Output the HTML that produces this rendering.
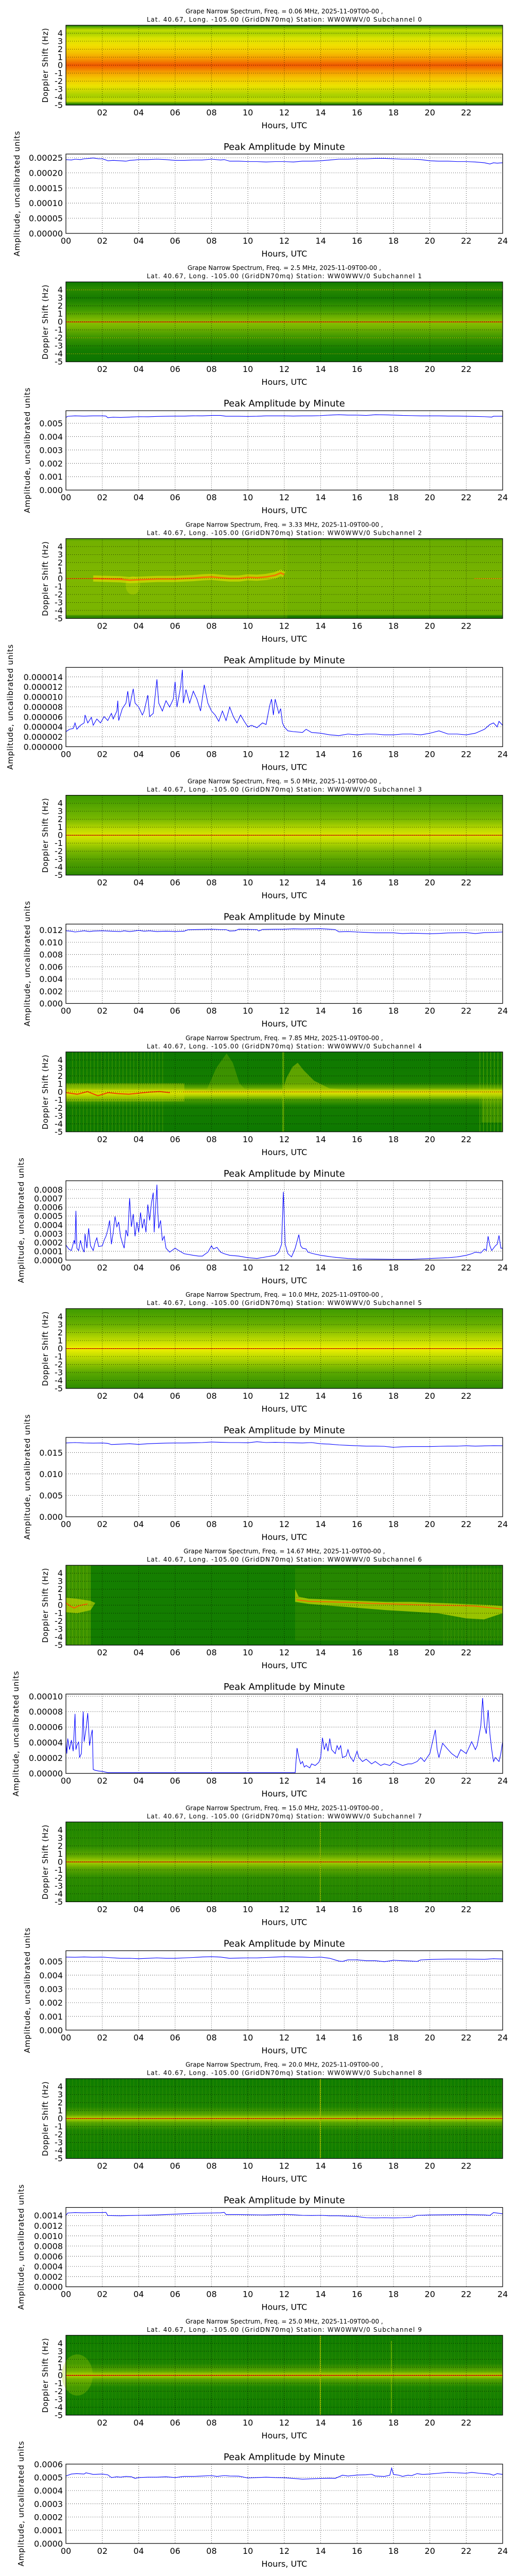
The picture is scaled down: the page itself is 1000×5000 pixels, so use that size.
<!DOCTYPE html>
<html><head><meta charset="utf-8"><style>
html,body{margin:0;padding:0;background:#fff;}
svg{display:block;}
text{font-family:"DejaVu Sans","Liberation Sans",sans-serif;fill:#000;}
.t1{font-size:12px;text-anchor:middle;}
.tk{font-size:16px;}
.r{text-anchor:end;}
.m{text-anchor:middle;}
.xl{font-size:16px;text-anchor:middle;}
.at{font-size:18px;text-anchor:middle;}
.yl{font-size:15px;text-anchor:middle;}
.g line{stroke:#000;stroke-width:0.8;stroke-dasharray:1,3;}
.c{fill:none;stroke:#0000ff;stroke-width:1.1;}
</style></head><body>
<svg width="1000" height="5000" viewBox="0 0 1000 5000" xmlns="http://www.w3.org/2000/svg" xml:space="preserve">
<defs>
<linearGradient id="g0" x1="0" y1="0" x2="0" y2="1">
<stop offset="0" stop-color="#0d6e00"/><stop offset=".02" stop-color="#5aa800"/><stop offset=".06" stop-color="#c4dc00"/><stop offset=".1" stop-color="#a8d000"/><stop offset=".16" stop-color="#d8e200"/><stop offset=".25" stop-color="#f0e000"/><stop offset=".34" stop-color="#f4c400"/><stop offset=".42" stop-color="#f59a00"/><stop offset=".5" stop-color="#f05800"/><stop offset=".58" stop-color="#f59a00"/><stop offset=".66" stop-color="#f4c400"/><stop offset=".76" stop-color="#ece200"/><stop offset=".88" stop-color="#a8d000"/><stop offset=".95" stop-color="#c8dc00"/><stop offset=".98" stop-color="#3a9000"/><stop offset="1" stop-color="#0d6e00"/>
</linearGradient>
<linearGradient id="g1" x1="0" y1="0" x2="0" y2="1">
<stop offset="0" stop-color="#0f7a00"/><stop offset=".08" stop-color="#2a8a00"/><stop offset=".2" stop-color="#167c00"/><stop offset=".35" stop-color="#3f9a00"/><stop offset=".46" stop-color="#78b600"/><stop offset=".5" stop-color="#88c000"/><stop offset=".56" stop-color="#78b600"/><stop offset=".7" stop-color="#3a9400"/><stop offset=".85" stop-color="#147c00"/><stop offset="1" stop-color="#0c7400"/>
</linearGradient>
<linearGradient id="g2" x1="0" y1="0" x2="0" y2="1">
<stop offset="0" stop-color="#2e8a00"/><stop offset=".03" stop-color="#6aac00"/><stop offset=".5" stop-color="#78b400"/><stop offset=".95" stop-color="#70b000"/><stop offset=".97" stop-color="#1c7c00"/><stop offset="1" stop-color="#137800"/>
</linearGradient>
<linearGradient id="g3" x1="0" y1="0" x2="0" y2="1">
<stop offset="0" stop-color="#3c9800"/><stop offset=".15" stop-color="#5aa800"/><stop offset=".3" stop-color="#78b800"/><stop offset=".42" stop-color="#b8d800"/><stop offset=".5" stop-color="#d8e400"/><stop offset=".58" stop-color="#b8d800"/><stop offset=".7" stop-color="#78b600"/><stop offset=".85" stop-color="#4c9c00"/><stop offset=".95" stop-color="#3a9200"/><stop offset="1" stop-color="#2a8800"/>
</linearGradient>
<linearGradient id="g4" x1="0" y1="0" x2="0" y2="1">
<stop offset="0" stop-color="#0d7800"/><stop offset=".38" stop-color="#147d00"/><stop offset=".45" stop-color="#5ea600"/><stop offset=".49" stop-color="#d0dc00"/><stop offset=".51" stop-color="#e0e000"/><stop offset=".54" stop-color="#b8d400"/><stop offset=".6" stop-color="#4a9c00"/><stop offset=".68" stop-color="#147c00"/><stop offset="1" stop-color="#0d7800"/>
</linearGradient>
<linearGradient id="g5" x1="0" y1="0" x2="0" y2="1">
<stop offset="0" stop-color="#3e9a00"/><stop offset=".2" stop-color="#68b000"/><stop offset=".4" stop-color="#c0dc00"/><stop offset=".5" stop-color="#f0f000"/><stop offset=".6" stop-color="#c0dc00"/><stop offset=".8" stop-color="#5aa800"/><stop offset="1" stop-color="#2e8c00"/>
</linearGradient>
<linearGradient id="g6" x1="0" y1="0" x2="0" y2="1">
<stop offset="0" stop-color="#157e00"/><stop offset="1" stop-color="#127c00"/>
</linearGradient>
<linearGradient id="g7" x1="0" y1="0" x2="0" y2="1">
<stop offset="0" stop-color="#1f8500"/><stop offset=".3" stop-color="#2a8c00"/><stop offset=".42" stop-color="#5ca600"/><stop offset=".5" stop-color="#a8d000"/><stop offset=".58" stop-color="#5ca600"/><stop offset=".7" stop-color="#2a8a00"/><stop offset="1" stop-color="#1f8400"/>
</linearGradient>
<linearGradient id="g8" x1="0" y1="0" x2="0" y2="1">
<stop offset="0" stop-color="#0e7c00"/><stop offset=".35" stop-color="#1a8200"/><stop offset=".45" stop-color="#58a400"/><stop offset=".5" stop-color="#b8d800"/><stop offset=".55" stop-color="#58a400"/><stop offset=".65" stop-color="#1a8200"/><stop offset="1" stop-color="#0e7c00"/>
</linearGradient>
<pattern id="str" width="7" height="10" patternUnits="userSpaceOnUse"><rect x="0" y="0" width="1.6" height="10" fill="#b8dc00"/></pattern>
<g id="sg" class="g">
<line x1="198.7" y1="49" x2="198.7" y2="204"/><line x1="269.3" y1="49" x2="269.3" y2="204"/><line x1="340" y1="49" x2="340" y2="204"/><line x1="410.7" y1="49" x2="410.7" y2="204"/><line x1="481.3" y1="49" x2="481.3" y2="204"/><line x1="552" y1="49" x2="552" y2="204"/><line x1="622.7" y1="49" x2="622.7" y2="204"/><line x1="693.3" y1="49" x2="693.3" y2="204"/><line x1="764" y1="49" x2="764" y2="204"/><line x1="834.7" y1="49" x2="834.7" y2="204"/><line x1="905.3" y1="49" x2="905.3" y2="204"/>
<line x1="128" y1="64.5" x2="976" y2="64.5"/><line x1="128" y1="80" x2="976" y2="80"/><line x1="128" y1="95.5" x2="976" y2="95.5"/><line x1="128" y1="111" x2="976" y2="111"/><line x1="128" y1="126.5" x2="976" y2="126.5"/><line x1="128" y1="142" x2="976" y2="142"/><line x1="128" y1="157.5" x2="976" y2="157.5"/><line x1="128" y1="173" x2="976" y2="173"/><line x1="128" y1="188.5" x2="976" y2="188.5"/>
</g>
<g id="ag" class="g">
<line x1="198.7" y1="299" x2="198.7" y2="453"/><line x1="269.3" y1="299" x2="269.3" y2="453"/><line x1="340" y1="299" x2="340" y2="453"/><line x1="410.7" y1="299" x2="410.7" y2="453"/><line x1="481.3" y1="299" x2="481.3" y2="453"/><line x1="552" y1="299" x2="552" y2="453"/><line x1="622.7" y1="299" x2="622.7" y2="453"/><line x1="693.3" y1="299" x2="693.3" y2="453"/><line x1="764" y1="299" x2="764" y2="453"/><line x1="834.7" y1="299" x2="834.7" y2="453"/><line x1="905.3" y1="299" x2="905.3" y2="453"/>
</g>
<rect id="sf" x="128" y="49" width="848" height="155" fill="none" stroke="#000" stroke-width="1.2"/>
<rect id="af" x="128" y="299" width="848" height="154" fill="none" stroke="#000" stroke-width="1.2"/>
</defs>

<!-- ============ SECTION 0 ============ -->
<g transform="translate(0,0)">
<text class="t1" x="552" y="26">Grape Narrow Spectrum, Freq. = 0.06 MHz, 2025-11-09T00-00 ,</text>
<text class="t1" x="552" y="42" textLength="534">Lat.  40.67, Long. -105.00 (GridDN70mq) Station: WW0WWV/0 Subchannel 0</text>
<rect x="128" y="49" width="848" height="155" fill="url(#g0)"/>
<use href="#sg"/><use href="#sf"/>
<g class="tk r"><text x="122" y="70">4</text><text x="122" y="85.5">3</text><text x="122" y="101">2</text><text x="122" y="116.5">1</text><text x="122" y="132">0</text><text x="122" y="147.5">-1</text><text x="122" y="163">-2</text><text x="122" y="178.5">-3</text><text x="122" y="194">-4</text><text x="122" y="209.5">-5</text></g>
<g class="tk m"><text x="198.7" y="224">02</text><text x="269.3" y="224">04</text><text x="340" y="224">06</text><text x="410.7" y="224">08</text><text x="481.3" y="224">10</text><text x="552" y="224">12</text><text x="622.7" y="224">14</text><text x="693.3" y="224">16</text><text x="764" y="224">18</text><text x="834.7" y="224">20</text><text x="905.3" y="224">22</text></g>
<text class="xl" x="552" y="249">Hours, UTC</text>
<text class="yl" transform="translate(93,127) rotate(-90)" textLength="145">Doppler Shift (Hz)</text>
<text class="at" x="552" y="291">Peak Amplitude by Minute</text>
<use href="#ag"/>
<g class="g"><line x1="128" y1="423.6" x2="976" y2="423.6"/><line x1="128" y1="394.2" x2="976" y2="394.2"/><line x1="128" y1="364.9" x2="976" y2="364.9"/><line x1="128" y1="335.5" x2="976" y2="335.5"/><line x1="128" y1="306.1" x2="976" y2="306.1"/></g>
<g class="tk r"><text x="122" y="459">0.00000</text><text x="122" y="429.6">0.00005</text><text x="122" y="400.2">0.00010</text><text x="122" y="370.9">0.00015</text><text x="122" y="341.5">0.00020</text><text x="122" y="312.1">0.00025</text></g>
<g transform="translate(128,453) scale(35.3333,-154)"><polyline class="c" vector-effect="non-scaling-stroke" points="0,.93 .3,.925 .5,.935 .8,.93 1,.94 1.3,.945 1.5,.95 1.8,.94 2,.94 2.2,.925 2.3,.915 2.6,.92 3,.915 3.3,.91 3.5,.92 3.8,.925 4,.93 4.5,.93 5,.935 5.5,.93 6,.92 6.5,.92 7,.925 7.5,.925 8,.935 8.5,.925 8.7,.93 9,.91 9.5,.91 10,.905 10.5,.905 11,.9 11.5,.905 12,.905 12.5,.9 13,.91 13.5,.91 14,.915 14.5,.925 15,.935 15.5,.935 16,.94 16.5,.94 17,.945 17.5,.945 18,.94 18.5,.935 19,.935 19.5,.93 20,.915 20.5,.91 21,.91 21.5,.905 22,.905 22.5,.9 23,.89 23.3,.875 23.5,.89 23.7,.885 24,.89"/></g>
<use href="#af"/>
<g class="tk m"><text x="128" y="473">00</text><text x="198.7" y="473">02</text><text x="269.3" y="473">04</text><text x="340" y="473">06</text><text x="410.7" y="473">08</text><text x="481.3" y="473">10</text><text x="552" y="473">12</text><text x="622.7" y="473">14</text><text x="693.3" y="473">16</text><text x="764" y="473">18</text><text x="834.7" y="473">20</text><text x="905.3" y="473">22</text><text x="976" y="473">24</text></g>
<text class="xl" x="552" y="498">Hours, UTC</text>
<text class="yl" transform="translate(38,376) rotate(-90)" textLength="243">Amplitude, uncalibrated units</text>
</g>

<!-- ============ SECTION 1 ============ -->
<g transform="translate(0,498.2)">
<text class="t1" x="552" y="26">Grape Narrow Spectrum, Freq. = 2.5 MHz, 2025-11-09T00-00 ,</text>
<text class="t1" x="552" y="42" textLength="534">Lat.  40.67, Long. -105.00 (GridDN70mq) Station: WW0WWV/0 Subchannel 1</text>
<rect x="128" y="49" width="848" height="155" fill="url(#g1)"/>
<rect x="128" y="64" width="848" height="1" fill="#c8e000" opacity=".6"/><rect x="128" y="157" width="848" height="1" fill="#c8e000" opacity=".6"/><rect x="128" y="188" width="848" height="1" fill="#c8e000" opacity=".5"/>
<rect x="128" y="126" width="848" height="1.4" fill="#ff1a00"/>
<use href="#sg"/><use href="#sf"/>
<g class="tk r"><text x="122" y="70">4</text><text x="122" y="85.5">3</text><text x="122" y="101">2</text><text x="122" y="116.5">1</text><text x="122" y="132">0</text><text x="122" y="147.5">-1</text><text x="122" y="163">-2</text><text x="122" y="178.5">-3</text><text x="122" y="194">-4</text><text x="122" y="209.5">-5</text></g>
<g class="tk m"><text x="198.7" y="224">02</text><text x="269.3" y="224">04</text><text x="340" y="224">06</text><text x="410.7" y="224">08</text><text x="481.3" y="224">10</text><text x="552" y="224">12</text><text x="622.7" y="224">14</text><text x="693.3" y="224">16</text><text x="764" y="224">18</text><text x="834.7" y="224">20</text><text x="905.3" y="224">22</text></g>
<text class="xl" x="552" y="249">Hours, UTC</text>
<text class="yl" transform="translate(93,127) rotate(-90)" textLength="145">Doppler Shift (Hz)</text>
<text class="at" x="552" y="291">Peak Amplitude by Minute</text>
<use href="#ag"/>
<g class="g"><line x1="128" y1="427" x2="976" y2="427"/><line x1="128" y1="401.1" x2="976" y2="401.1"/><line x1="128" y1="375.1" x2="976" y2="375.1"/><line x1="128" y1="349.1" x2="976" y2="349.1"/><line x1="128" y1="323.2" x2="976" y2="323.2"/></g>
<g class="tk r"><text x="122" y="459">0.000</text><text x="122" y="433">0.001</text><text x="122" y="407.1">0.002</text><text x="122" y="381.1">0.003</text><text x="122" y="355.1">0.004</text><text x="122" y="329.2">0.005</text></g>
<g transform="translate(128,453) scale(35.3333,-154)"><polyline class="c" vector-effect="non-scaling-stroke" points="0,.915 .1,.93 .5,.935 1,.932 1.5,.935 2,.935 2.2,.933 2.3,.912 2.6,.918 3,.915 3.5,.92 4,.925 4.5,.924 5,.928 5.5,.93 6,.932 6.5,.932 7,.936 7.5,.935 8,.94 8.5,.94 8.8,.93 9,.93 9.5,.93 10,.928 10.5,.93 11,.935 11.5,.935 12,.935 12.5,.933 13,.935 13.5,.935 14,.938 14.5,.945 15,.95 15.5,.945 16,.945 16.5,.94 17,.95 17.5,.948 18,.945 18.5,.94 19,.938 19.5,.935 20,.935 20.5,.935 21,.933 21.5,.933 22,.93 22.5,.928 23,.925 23.4,.92 23.5,.93 24,.93"/></g>
<use href="#af"/>
<g class="tk m"><text x="128" y="473">00</text><text x="198.7" y="473">02</text><text x="269.3" y="473">04</text><text x="340" y="473">06</text><text x="410.7" y="473">08</text><text x="481.3" y="473">10</text><text x="552" y="473">12</text><text x="622.7" y="473">14</text><text x="693.3" y="473">16</text><text x="764" y="473">18</text><text x="834.7" y="473">20</text><text x="905.3" y="473">22</text><text x="976" y="473">24</text></g>
<text class="xl" x="552" y="498">Hours, UTC</text>
<text class="yl" transform="translate(58,376) rotate(-90)" textLength="243">Amplitude, uncalibrated units</text>
</g>

<!-- ============ SECTION 2 ============ -->
<g transform="translate(0,996.4)">
<text class="t1" x="552" y="26">Grape Narrow Spectrum, Freq. = 3.33 MHz, 2025-11-09T00-00 ,</text>
<text class="t1" x="552" y="42" textLength="534">Lat.  40.67, Long. -105.00 (GridDN70mq) Station: WW0WWV/0 Subchannel 2</text>
<rect x="128" y="49" width="848" height="155" fill="url(#g2)"/>
<rect x="128" y="49" width="430" height="155" fill="#a0c800" opacity=".18"/>
<ellipse cx="258" cy="140" rx="14" ry="18" fill="#d8e400" opacity=".3"/>
<polyline points="181,126.5 234,128 252,129.6 269,128.8 305,127.3 340,127.3 358,126.5 375,125.7 393,124.2 411,123.4 428,125 446,126.5 464,126.5 481,124.2 499,125 517,123.4 534,120.3 545,115.6 552,118.8" fill="none" stroke="#e4e200" stroke-width="12" opacity=".6"/>
<polyline points="181,126.5 234,128 252,129.6 269,128.8 305,127.3 340,127.3 358,126.5 375,125.7 393,124.2 411,123.4 428,125 446,126.5 464,126.5 481,124.2 499,125 517,123.4 534,120.3 545,115.6 552,118.8" fill="none" stroke="#f07800" stroke-width="3"/>
<rect x="128" y="126" width="110" height="1.3" fill="#ff4000"/><rect x="920" y="126" width="56" height="1.3" fill="#f09000"/>
<use href="#sg"/><use href="#sf"/>
<g class="tk r"><text x="122" y="70">4</text><text x="122" y="85.5">3</text><text x="122" y="101">2</text><text x="122" y="116.5">1</text><text x="122" y="132">0</text><text x="122" y="147.5">-1</text><text x="122" y="163">-2</text><text x="122" y="178.5">-3</text><text x="122" y="194">-4</text><text x="122" y="209.5">-5</text></g>
<g class="tk m"><text x="198.7" y="224">02</text><text x="269.3" y="224">04</text><text x="340" y="224">06</text><text x="410.7" y="224">08</text><text x="481.3" y="224">10</text><text x="552" y="224">12</text><text x="622.7" y="224">14</text><text x="693.3" y="224">16</text><text x="764" y="224">18</text><text x="834.7" y="224">20</text><text x="905.3" y="224">22</text></g>
<text class="xl" x="552" y="249">Hours, UTC</text>
<text class="yl" transform="translate(93,127) rotate(-90)" textLength="145">Doppler Shift (Hz)</text>
<text class="at" x="552" y="291">Peak Amplitude by Minute</text>
<use href="#ag"/>
<g class="g"><line x1="128" y1="433.6" x2="976" y2="433.6"/><line x1="128" y1="414.3" x2="976" y2="414.3"/><line x1="128" y1="394.9" x2="976" y2="394.9"/><line x1="128" y1="375.5" x2="976" y2="375.5"/><line x1="128" y1="356.1" x2="976" y2="356.1"/><line x1="128" y1="336.8" x2="976" y2="336.8"/><line x1="128" y1="317.4" x2="976" y2="317.4"/></g>
<g class="tk r"><text x="122" y="459">0.000000</text><text x="122" y="439.6">0.000002</text><text x="122" y="420.3">0.000004</text><text x="122" y="400.9">0.000006</text><text x="122" y="381.5">0.000008</text><text x="122" y="362.1">0.000010</text><text x="122" y="342.8">0.000012</text><text x="122" y="323.4">0.000014</text></g>
<g transform="translate(128,453) scale(35.3333,-154)"><polyline class="c" vector-effect="non-scaling-stroke" points="0,.19 .2,.22 .4,.23 .5,.3 .6,.22 .8,.27 1,.3 1.05,.4 1.2,.3 1.4,.37 1.5,.27 1.7,.35 1.9,.3 2.1,.38 2.3,.33 2.5,.42 2.6,.35 2.8,.45 2.85,.58 2.9,.33 3.1,.48 3.3,.55 3.4,.7 3.5,.5 3.6,.62 3.7,.73 3.8,.55 4,.5 4.2,.4 4.3,.45 4.5,.65 4.6,.38 4.8,.42 5,.85 5.1,.55 5.3,.45 5.5,.58 5.7,.5 5.9,.6 6,.82 6.1,.5 6.3,.75 6.4,.97 6.45,.55 6.6,.72 6.8,.55 7,.7 7.2,.6 7.4,.45 7.6,.78 7.8,.55 8,.45 8.2,.4 8.4,.32 8.6,.45 8.8,.33 9,.5 9.2,.38 9.4,.3 9.6,.4 9.8,.32 10,.25 10.2,.27 10.5,.24 10.8,.3 11,.28 11.2,.52 11.3,.6 11.4,.4 11.5,.6 11.7,.42 11.8,.48 11.9,.3 12,.25 12.2,.2 12.5,.19 13,.18 13.2,.22 13.5,.18 14,.17 14.5,.15 15,.14 15.5,.16 16,.15 16.5,.16 17,.16 17.5,.15 18,.15 18.5,.16 19,.16 19.5,.15 20,.17 20.5,.2 21,.16 21.5,.16 22,.15 22.5,.17 23,.22 23.3,.28 23.5,.3 23.7,.25 23.8,.32 24,.27"/></g>
<use href="#af"/>
<g class="tk m"><text x="128" y="473">00</text><text x="198.7" y="473">02</text><text x="269.3" y="473">04</text><text x="340" y="473">06</text><text x="410.7" y="473">08</text><text x="481.3" y="473">10</text><text x="552" y="473">12</text><text x="622.7" y="473">14</text><text x="693.3" y="473">16</text><text x="764" y="473">18</text><text x="834.7" y="473">20</text><text x="905.3" y="473">22</text><text x="976" y="473">24</text></g>
<text class="xl" x="552" y="498">Hours, UTC</text>
<text class="yl" transform="translate(25,376) rotate(-90)" textLength="243">Amplitude, uncalibrated units</text>
</g>

<!-- ============ SECTION 3 ============ -->
<g transform="translate(0,1494.6)">
<text class="t1" x="552" y="26">Grape Narrow Spectrum, Freq. = 5.0 MHz, 2025-11-09T00-00 ,</text>
<text class="t1" x="552" y="42" textLength="534">Lat.  40.67, Long. -105.00 (GridDN70mq) Station: WW0WWV/0 Subchannel 3</text>
<rect x="128" y="49" width="848" height="155" fill="url(#g3)"/>
<rect x="128" y="126" width="848" height="1.2" fill="#e00000"/>
<use href="#sg"/><use href="#sf"/>
<g class="tk r"><text x="122" y="70">4</text><text x="122" y="85.5">3</text><text x="122" y="101">2</text><text x="122" y="116.5">1</text><text x="122" y="132">0</text><text x="122" y="147.5">-1</text><text x="122" y="163">-2</text><text x="122" y="178.5">-3</text><text x="122" y="194">-4</text><text x="122" y="209.5">-5</text></g>
<g class="tk m"><text x="198.7" y="224">02</text><text x="269.3" y="224">04</text><text x="340" y="224">06</text><text x="410.7" y="224">08</text><text x="481.3" y="224">10</text><text x="552" y="224">12</text><text x="622.7" y="224">14</text><text x="693.3" y="224">16</text><text x="764" y="224">18</text><text x="834.7" y="224">20</text><text x="905.3" y="224">22</text></g>
<text class="xl" x="552" y="249">Hours, UTC</text>
<text class="yl" transform="translate(93,127) rotate(-90)" textLength="145">Doppler Shift (Hz)</text>
<text class="at" x="552" y="291">Peak Amplitude by Minute</text>
<use href="#ag"/>
<g class="g"><line x1="128" y1="429.3" x2="976" y2="429.3"/><line x1="128" y1="405.5" x2="976" y2="405.5"/><line x1="128" y1="381.8" x2="976" y2="381.8"/><line x1="128" y1="358.1" x2="976" y2="358.1"/><line x1="128" y1="334.4" x2="976" y2="334.4"/><line x1="128" y1="310.6" x2="976" y2="310.6"/></g>
<g class="tk r"><text x="122" y="459">0.000</text><text x="122" y="435.3">0.002</text><text x="122" y="411.5">0.004</text><text x="122" y="387.8">0.006</text><text x="122" y="364.1">0.008</text><text x="122" y="340.4">0.010</text><text x="122" y="316.6">0.012</text></g>
<g transform="translate(128,453) scale(35.3333,-154)"><polyline class="c" vector-effect="non-scaling-stroke" points="0,.915 .3,.91 .5,.9 1,.915 1.3,.905 1.5,.912 2,.915 2.5,.91 3,.905 3.2,.915 3.5,.905 4,.92 4.3,.91 4.6,.915 5,.905 5.5,.91 6,.905 6.5,.91 6.7,.928 7.5,.932 8,.935 8.5,.93 8.8,.93 9,.912 9.3,.915 9.5,.935 10,.932 10.5,.93 10.6,.912 10.8,.932 11.5,.935 12,.935 12.5,.94 13,.938 13.5,.94 14,.942 14.5,.935 14.8,.93 15,.902 15.5,.905 16,.9 16.5,.895 17,.89 17.5,.89 18,.89 18.5,.88 19,.885 19.5,.882 20,.878 20.5,.882 21,.888 21.5,.89 22,.892 22.5,.88 23,.892 23.5,.895 24,.9"/></g>
<use href="#af"/>
<g class="tk m"><text x="128" y="473">00</text><text x="198.7" y="473">02</text><text x="269.3" y="473">04</text><text x="340" y="473">06</text><text x="410.7" y="473">08</text><text x="481.3" y="473">10</text><text x="552" y="473">12</text><text x="622.7" y="473">14</text><text x="693.3" y="473">16</text><text x="764" y="473">18</text><text x="834.7" y="473">20</text><text x="905.3" y="473">22</text><text x="976" y="473">24</text></g>
<text class="xl" x="552" y="498">Hours, UTC</text>
<text class="yl" transform="translate(58,376) rotate(-90)" textLength="243">Amplitude, uncalibrated units</text>
</g>

<!-- ============ SECTION 4 ============ -->
<g transform="translate(0,1992.8)">
<text class="t1" x="552" y="26">Grape Narrow Spectrum, Freq. = 7.85 MHz, 2025-11-09T00-00 ,</text>
<text class="t1" x="552" y="42" textLength="534">Lat.  40.67, Long. -105.00 (GridDN70mq) Station: WW0WWV/0 Subchannel 4</text>
<rect x="128" y="49" width="848" height="155" fill="url(#g4)"/>
<rect x="140" y="49" width="180" height="155" fill="url(#str)" opacity=".2"/>
<rect x="928" y="49" width="48" height="155" fill="url(#str)" opacity=".3"/>
<rect x="128" y="110" width="230" height="35" fill="#d8e000" opacity=".35"/>
<polygon points="400,126 420,80 440,52 452,70 465,110 480,126" fill="#a8cc00" opacity=".28"/>
<polygon points="548,126 556,100 568,78 578,70 590,85 610,105 640,120 720,126 548,130" fill="#c8dc00" opacity=".42"/>
<rect x="548" y="49" width="4" height="155" fill="#b0d400" opacity=".4"/>
<rect x="935" y="126" width="40" height="60" fill="#b0d000" opacity=".25"/>
<polyline points="128,128 150,131 170,126 190,134 210,128 230,130 250,131 270,129 290,127 310,126 330,128" fill="none" stroke="#f04000" stroke-width="2"/>
<rect x="355" y="126" width="620" height="1.3" fill="#f0a000"/>
<use href="#sg"/><use href="#sf"/>
<g class="tk r"><text x="122" y="70">4</text><text x="122" y="85.5">3</text><text x="122" y="101">2</text><text x="122" y="116.5">1</text><text x="122" y="132">0</text><text x="122" y="147.5">-1</text><text x="122" y="163">-2</text><text x="122" y="178.5">-3</text><text x="122" y="194">-4</text><text x="122" y="209.5">-5</text></g>
<g class="tk m"><text x="198.7" y="224">02</text><text x="269.3" y="224">04</text><text x="340" y="224">06</text><text x="410.7" y="224">08</text><text x="481.3" y="224">10</text><text x="552" y="224">12</text><text x="622.7" y="224">14</text><text x="693.3" y="224">16</text><text x="764" y="224">18</text><text x="834.7" y="224">20</text><text x="905.3" y="224">22</text></g>
<text class="xl" x="552" y="249">Hours, UTC</text>
<text class="yl" transform="translate(93,127) rotate(-90)" textLength="145">Doppler Shift (Hz)</text>
<text class="at" x="552" y="291">Peak Amplitude by Minute</text>
<use href="#ag"/>
<g class="g"><line x1="128" y1="435.9" x2="976" y2="435.9"/><line x1="128" y1="418.8" x2="976" y2="418.8"/><line x1="128" y1="401.7" x2="976" y2="401.7"/><line x1="128" y1="384.6" x2="976" y2="384.6"/><line x1="128" y1="367.4" x2="976" y2="367.4"/><line x1="128" y1="350.3" x2="976" y2="350.3"/><line x1="128" y1="333.2" x2="976" y2="333.2"/><line x1="128" y1="316.1" x2="976" y2="316.1"/></g>
<g class="tk r"><text x="122" y="459">0.0000</text><text x="122" y="441.9">0.0001</text><text x="122" y="424.8">0.0002</text><text x="122" y="407.7">0.0003</text><text x="122" y="390.6">0.0004</text><text x="122" y="373.4">0.0005</text><text x="122" y="356.3">0.0006</text><text x="122" y="339.2">0.0007</text><text x="122" y="322.1">0.0008</text></g>
<g transform="translate(128,453) scale(35.3333,-154)"><polyline class="c" vector-effect="non-scaling-stroke" points="0,.19 .15,.14 .3,.12 .45,.25 .5,.2 .55,.62 .6,.15 .7,.12 .8,.25 .9,.15 1,.1 1.05,.33 1.15,.15 1.25,.4 1.35,.18 1.5,.12 1.6,.22 1.7,.28 1.8,.17 2,.18 2.1,.25 2.2,.3 2.3,.38 2.4,.5 2.5,.2 2.6,.35 2.7,.55 2.8,.42 2.9,.48 3,.3 3.1,.22 3.2,.15 3.3,.38 3.4,.3 3.5,.78 3.6,.42 3.7,.58 3.8,.3 3.9,.48 4,.35 4.1,.6 4.2,.4 4.3,.52 4.4,.35 4.5,.7 4.6,.5 4.7,.72 4.8,.85 4.85,.35 4.9,.55 5,.95 5.05,.6 5.1,.4 5.2,.5 5.3,.25 5.4,.3 5.5,.15 5.7,.1 6,.15 6.2,.12 6.5,.08 7,.06 7.3,.05 7.5,.05 7.8,.1 8,.18 8.1,.14 8.3,.16 8.5,.1 8.7,.08 9,.06 9.5,.05 10,.03 10.5,.02 11,.04 11.5,.06 11.7,.1 11.85,.2 11.95,.86 12.05,.2 12.2,.08 12.4,.04 12.6,.15 12.8,.32 12.9,.18 13,.15 13.2,.14 13.3,.1 13.6,.08 14,.06 14.3,.05 14.6,.04 15,.03 15.5,.02 16,.015 17,.012 18,.01 19,.01 19.5,.015 20,.02 20.5,.025 21,.03 21.5,.04 22,.06 22.3,.08 22.5,.1 22.8,.09 23,.14 23.1,.12 23.2,.3 23.3,.18 23.4,.12 23.6,.18 23.7,.2 23.8,.31 23.9,.15 24,.15"/></g>
<use href="#af"/>
<g class="tk m"><text x="128" y="473">00</text><text x="198.7" y="473">02</text><text x="269.3" y="473">04</text><text x="340" y="473">06</text><text x="410.7" y="473">08</text><text x="481.3" y="473">10</text><text x="552" y="473">12</text><text x="622.7" y="473">14</text><text x="693.3" y="473">16</text><text x="764" y="473">18</text><text x="834.7" y="473">20</text><text x="905.3" y="473">22</text><text x="976" y="473">24</text></g>
<text class="xl" x="552" y="498">Hours, UTC</text>
<text class="yl" transform="translate(46,376) rotate(-90)" textLength="243">Amplitude, uncalibrated units</text>
</g>

<!-- ============ SECTION 5 ============ -->
<g transform="translate(0,2491)">
<text class="t1" x="552" y="26">Grape Narrow Spectrum, Freq. = 10.0 MHz, 2025-11-09T00-00 ,</text>
<text class="t1" x="552" y="42" textLength="534">Lat.  40.67, Long. -105.00 (GridDN70mq) Station: WW0WWV/0 Subchannel 5</text>
<rect x="128" y="49" width="848" height="155" fill="url(#g5)"/>
<rect x="128" y="126" width="848" height="1.2" fill="#e00000"/>
<use href="#sg"/><use href="#sf"/>
<g class="tk r"><text x="122" y="70">4</text><text x="122" y="85.5">3</text><text x="122" y="101">2</text><text x="122" y="116.5">1</text><text x="122" y="132">0</text><text x="122" y="147.5">-1</text><text x="122" y="163">-2</text><text x="122" y="178.5">-3</text><text x="122" y="194">-4</text><text x="122" y="209.5">-5</text></g>
<g class="tk m"><text x="198.7" y="224">02</text><text x="269.3" y="224">04</text><text x="340" y="224">06</text><text x="410.7" y="224">08</text><text x="481.3" y="224">10</text><text x="552" y="224">12</text><text x="622.7" y="224">14</text><text x="693.3" y="224">16</text><text x="764" y="224">18</text><text x="834.7" y="224">20</text><text x="905.3" y="224">22</text></g>
<text class="xl" x="552" y="249">Hours, UTC</text>
<text class="yl" transform="translate(93,127) rotate(-90)" textLength="145">Doppler Shift (Hz)</text>
<text class="at" x="552" y="291">Peak Amplitude by Minute</text>
<use href="#ag"/>
<g class="g"><line x1="128" y1="411.4" x2="976" y2="411.4"/><line x1="128" y1="369.8" x2="976" y2="369.8"/><line x1="128" y1="328.3" x2="976" y2="328.3"/></g>
<g class="tk r"><text x="122" y="459">0.000</text><text x="122" y="417.4">0.005</text><text x="122" y="375.8">0.010</text><text x="122" y="334.3">0.015</text></g>
<g transform="translate(128,453) scale(35.3333,-154)"><polyline class="c" vector-effect="non-scaling-stroke" points="0,.93 .5,.935 1,.93 1.5,.928 2,.93 2.3,.925 2.5,.91 3,.915 3.5,.92 4,.912 4.5,.92 5,.925 5.5,.928 6,.93 6.5,.93 7,.932 7.5,.935 8,.942 8.5,.938 9,.935 9.5,.935 10,.932 10.5,.945 11,.935 11.5,.938 12,.935 12.5,.932 13,.93 13.5,.935 14,.92 14.5,.915 15,.905 15.5,.9 16,.895 16.5,.89 17,.89 17.5,.888 18,.875 18.5,.882 19,.885 19.5,.885 20,.885 20.5,.888 21,.89 21.5,.89 22,.895 22.5,.89 23,.893 23.5,.896 24,.895"/></g>
<use href="#af"/>
<g class="tk m"><text x="128" y="473">00</text><text x="198.7" y="473">02</text><text x="269.3" y="473">04</text><text x="340" y="473">06</text><text x="410.7" y="473">08</text><text x="481.3" y="473">10</text><text x="552" y="473">12</text><text x="622.7" y="473">14</text><text x="693.3" y="473">16</text><text x="764" y="473">18</text><text x="834.7" y="473">20</text><text x="905.3" y="473">22</text><text x="976" y="473">24</text></g>
<text class="xl" x="552" y="498">Hours, UTC</text>
<text class="yl" transform="translate(58,376) rotate(-90)" textLength="243">Amplitude, uncalibrated units</text>
</g>

<!-- ============ SECTION 6 ============ -->
<g transform="translate(0,2989.2)">
<text class="t1" x="552" y="26">Grape Narrow Spectrum, Freq. = 14.67 MHz, 2025-11-09T00-00 ,</text>
<text class="t1" x="552" y="42" textLength="534">Lat.  40.67, Long. -105.00 (GridDN70mq) Station: WW0WWV/0 Subchannel 6</text>
<rect x="128" y="49" width="848" height="155" fill="url(#g6)"/>
<rect x="128" y="49" width="48" height="155" fill="#78b400" opacity=".4"/>
<rect x="128" y="49" width="48" height="155" fill="url(#str)" opacity=".2"/>
<polygon points="128,112 150,114 176,118 185,122 176,136 150,142 128,140" fill="#d0dc00" opacity=".6"/>
<polyline points="128,122 136,128 144,132 152,128 160,126 170,124" fill="none" stroke="#f06000" stroke-width="2"/>
<rect x="573" y="55" width="403" height="140" fill="#5aa200" opacity=".25"/>
<rect x="860" y="49" width="116" height="155" fill="url(#str)" opacity=".12"/>
<polygon points="573,95 580,110 600,114 650,116 700,118 750,120 800,120 850,122 900,124 950,126 976,128 976,142 940,154 905,152 850,142 750,136 650,128 600,124 573,120" fill="#c8dc00" opacity=".7"/>
<polyline points="576,116 600,119 640,120 680,121 720,123 760,124 820,126 880,127 920,128 950,131 976,134" fill="none" stroke="#f07000" stroke-width="2"/>
<use href="#sg"/><use href="#sf"/>
<g class="tk r"><text x="122" y="70">4</text><text x="122" y="85.5">3</text><text x="122" y="101">2</text><text x="122" y="116.5">1</text><text x="122" y="132">0</text><text x="122" y="147.5">-1</text><text x="122" y="163">-2</text><text x="122" y="178.5">-3</text><text x="122" y="194">-4</text><text x="122" y="209.5">-5</text></g>
<g class="tk m"><text x="198.7" y="224">02</text><text x="269.3" y="224">04</text><text x="340" y="224">06</text><text x="410.7" y="224">08</text><text x="481.3" y="224">10</text><text x="552" y="224">12</text><text x="622.7" y="224">14</text><text x="693.3" y="224">16</text><text x="764" y="224">18</text><text x="834.7" y="224">20</text><text x="905.3" y="224">22</text></g>
<text class="xl" x="552" y="249">Hours, UTC</text>
<text class="yl" transform="translate(93,127) rotate(-90)" textLength="145">Doppler Shift (Hz)</text>
<text class="at" x="552" y="291">Peak Amplitude by Minute</text>
<use href="#ag"/>
<g class="g"><line x1="128" y1="423" x2="976" y2="423"/><line x1="128" y1="393" x2="976" y2="393"/><line x1="128" y1="363" x2="976" y2="363"/><line x1="128" y1="333" x2="976" y2="333"/><line x1="128" y1="303.1" x2="976" y2="303.1"/></g>
<g class="tk r"><text x="122" y="459">0.00000</text><text x="122" y="429">0.00002</text><text x="122" y="399">0.00004</text><text x="122" y="369">0.00006</text><text x="122" y="339">0.00008</text><text x="122" y="309.1">0.00010</text></g>
<g transform="translate(128,453) scale(35.3333,-154)"><polyline class="c" vector-effect="non-scaling-stroke" points="0,.4 .05,.25 .1,.44 .2,.3 .3,.42 .4,.28 .5,.75 .55,.3 .6,.35 .7,.4 .75,.2 .85,.25 .9,.5 .95,.78 1,.4 1.1,.55 1.2,.76 1.3,.35 1.4,.5 1.45,.55 1.5,.05 1.6,.04 1.8,.03 2,.025 2.3,.01 5,.01 8,.01 12.6,.01 12.7,.32 12.8,.2 12.9,.12 13,.15 13.1,.08 13.2,.1 13.4,.07 13.5,.12 13.7,.1 13.9,.14 14,.2 14.1,.45 14.2,.3 14.3,.38 14.4,.28 14.5,.44 14.6,.3 14.8,.25 14.9,.35 15,.3 15.1,.35 15.2,.2 15.4,.22 15.5,.3 15.6,.22 15.8,.15 16,.28 16.1,.2 16.3,.15 16.5,.18 16.8,.12 17,.15 17.3,.1 17.5,.12 17.8,.1 18,.15 18.3,.12 18.5,.1 18.8,.12 19,.12 19.3,.15 19.5,.2 19.7,.15 20,.25 20.1,.35 20.3,.55 20.4,.3 20.5,.2 20.7,.38 21,.3 21.2,.25 21.5,.2 21.7,.3 22,.25 22.2,.35 22.3,.4 22.5,.3 22.6,.35 22.8,.6 22.9,.95 23,.6 23.1,.5 23.2,.8 23.3,.5 23.4,.3 23.5,.15 23.6,.2 23.8,.15 23.9,.25 24,.4"/></g>
<use href="#af"/>
<g class="tk m"><text x="128" y="473">00</text><text x="198.7" y="473">02</text><text x="269.3" y="473">04</text><text x="340" y="473">06</text><text x="410.7" y="473">08</text><text x="481.3" y="473">10</text><text x="552" y="473">12</text><text x="622.7" y="473">14</text><text x="693.3" y="473">16</text><text x="764" y="473">18</text><text x="834.7" y="473">20</text><text x="905.3" y="473">22</text><text x="976" y="473">24</text></g>
<text class="xl" x="552" y="498">Hours, UTC</text>
<text class="yl" transform="translate(36,376) rotate(-90)" textLength="243">Amplitude, uncalibrated units</text>
</g>

<!-- ============ SECTION 7 ============ -->
<g transform="translate(0,3487.4)">
<text class="t1" x="552" y="26">Grape Narrow Spectrum, Freq. = 15.0 MHz, 2025-11-09T00-00 ,</text>
<text class="t1" x="552" y="42" textLength="534">Lat.  40.67, Long. -105.00 (GridDN70mq) Station: WW0WWV/0 Subchannel 7</text>
<rect x="128" y="49" width="848" height="155" fill="url(#g7)"/>
<rect x="128" y="49" width="848" height="155" fill="url(#str)" opacity=".05"/>
<rect x="621" y="49" width="2" height="155" fill="#b8d800" opacity=".6"/>
<rect x="128" y="126" width="848" height="1.3" fill="#f00000"/>
<use href="#sg"/><use href="#sf"/>
<g class="tk r"><text x="122" y="70">4</text><text x="122" y="85.5">3</text><text x="122" y="101">2</text><text x="122" y="116.5">1</text><text x="122" y="132">0</text><text x="122" y="147.5">-1</text><text x="122" y="163">-2</text><text x="122" y="178.5">-3</text><text x="122" y="194">-4</text><text x="122" y="209.5">-5</text></g>
<g class="tk m"><text x="198.7" y="224">02</text><text x="269.3" y="224">04</text><text x="340" y="224">06</text><text x="410.7" y="224">08</text><text x="481.3" y="224">10</text><text x="552" y="224">12</text><text x="622.7" y="224">14</text><text x="693.3" y="224">16</text><text x="764" y="224">18</text><text x="834.7" y="224">20</text><text x="905.3" y="224">22</text></g>
<text class="xl" x="552" y="249">Hours, UTC</text>
<text class="yl" transform="translate(93,127) rotate(-90)" textLength="145">Doppler Shift (Hz)</text>
<text class="at" x="552" y="291">Peak Amplitude by Minute</text>
<use href="#ag"/>
<g class="g"><line x1="128" y1="426.4" x2="976" y2="426.4"/><line x1="128" y1="399.7" x2="976" y2="399.7"/><line x1="128" y1="373.1" x2="976" y2="373.1"/><line x1="128" y1="346.4" x2="976" y2="346.4"/><line x1="128" y1="319.8" x2="976" y2="319.8"/></g>
<g class="tk r"><text x="122" y="459">0.000</text><text x="122" y="432.4">0.001</text><text x="122" y="405.7">0.002</text><text x="122" y="379.1">0.003</text><text x="122" y="352.4">0.004</text><text x="122" y="325.8">0.005</text></g>
<g transform="translate(128,453) scale(35.3333,-154)"><polyline class="c" vector-effect="non-scaling-stroke" points="0,.92 .5,.918 1,.922 1.5,.918 2,.92 2.3,.915 3,.905 3.5,.905 4,.9 4.5,.905 5,.91 5.5,.905 6,.905 6.5,.91 7,.915 7.5,.922 8,.925 8.5,.92 9,.905 9.5,.908 10,.91 10.5,.91 11,.915 11.5,.92 12,.925 12.5,.922 13,.92 13.5,.915 14,.92 14.5,.905 15,.87 15.2,.865 15.5,.885 16,.885 16.5,.875 17,.875 17.5,.862 18,.88 18.5,.875 19,.87 19.3,.865 19.5,.885 20,.89 21,.895 22,.895 23,.892 23.5,.9 24,.895"/></g>
<use href="#af"/>
<g class="tk m"><text x="128" y="473">00</text><text x="198.7" y="473">02</text><text x="269.3" y="473">04</text><text x="340" y="473">06</text><text x="410.7" y="473">08</text><text x="481.3" y="473">10</text><text x="552" y="473">12</text><text x="622.7" y="473">14</text><text x="693.3" y="473">16</text><text x="764" y="473">18</text><text x="834.7" y="473">20</text><text x="905.3" y="473">22</text><text x="976" y="473">24</text></g>
<text class="xl" x="552" y="498">Hours, UTC</text>
<text class="yl" transform="translate(58,376) rotate(-90)" textLength="243">Amplitude, uncalibrated units</text>
</g>

<!-- ============ SECTION 8 ============ -->
<g transform="translate(0,3985.6)">
<text class="t1" x="552" y="26">Grape Narrow Spectrum, Freq. = 20.0 MHz, 2025-11-09T00-00 ,</text>
<text class="t1" x="552" y="42" textLength="534">Lat.  40.67, Long. -105.00 (GridDN70mq) Station: WW0WWV/0 Subchannel 8</text>
<rect x="128" y="49" width="848" height="155" fill="url(#g8)"/>
<rect x="128" y="49" width="848" height="155" fill="url(#str)" opacity=".1"/>
<rect x="621" y="49" width="2" height="155" fill="#c8dc00" opacity=".7"/>
<rect x="128" y="126" width="848" height="1.3" fill="#f00000"/>
<use href="#sg"/><use href="#sf"/>
<g class="tk r"><text x="122" y="70">4</text><text x="122" y="85.5">3</text><text x="122" y="101">2</text><text x="122" y="116.5">1</text><text x="122" y="132">0</text><text x="122" y="147.5">-1</text><text x="122" y="163">-2</text><text x="122" y="178.5">-3</text><text x="122" y="194">-4</text><text x="122" y="209.5">-5</text></g>
<g class="tk m"><text x="198.7" y="224">02</text><text x="269.3" y="224">04</text><text x="340" y="224">06</text><text x="410.7" y="224">08</text><text x="481.3" y="224">10</text><text x="552" y="224">12</text><text x="622.7" y="224">14</text><text x="693.3" y="224">16</text><text x="764" y="224">18</text><text x="834.7" y="224">20</text><text x="905.3" y="224">22</text></g>
<text class="xl" x="552" y="249">Hours, UTC</text>
<text class="yl" transform="translate(93,127) rotate(-90)" textLength="145">Doppler Shift (Hz)</text>
<text class="at" x="552" y="291">Peak Amplitude by Minute</text>
<use href="#ag"/>
<g class="g"><line x1="128" y1="433.2" x2="976" y2="433.2"/><line x1="128" y1="413.5" x2="976" y2="413.5"/><line x1="128" y1="393.7" x2="976" y2="393.7"/><line x1="128" y1="373.9" x2="976" y2="373.9"/><line x1="128" y1="354.2" x2="976" y2="354.2"/><line x1="128" y1="334.4" x2="976" y2="334.4"/><line x1="128" y1="314.6" x2="976" y2="314.6"/></g>
<g class="tk r"><text x="122" y="459">0.0000</text><text x="122" y="439.2">0.0002</text><text x="122" y="419.5">0.0004</text><text x="122" y="399.7">0.0006</text><text x="122" y="379.9">0.0008</text><text x="122" y="360.2">0.0010</text><text x="122" y="340.4">0.0012</text><text x="122" y="320.6">0.0014</text></g>
<g transform="translate(128,453) scale(35.3333,-154)"><polyline class="c" vector-effect="non-scaling-stroke" points="0,.9 .1,.93 .5,.935 1,.932 1.5,.935 2,.935 2.2,.938 2.3,.898 3,.895 3.5,.898 4,.9 4.5,.902 5,.905 5.5,.91 6,.915 6.5,.92 7,.925 7.5,.928 8,.93 8.5,.932 8.7,.938 8.8,.91 9.5,.91 10,.908 11,.905 12,.912 12.5,.908 13,.9 13.5,.898 14,.9 14.5,.895 15,.895 15.5,.89 16,.885 16.5,.87 17,.868 17.5,.87 18,.868 18.5,.87 19,.875 19.3,.9 20,.905 21,.908 22,.91 22.5,.908 23,.905 23.3,.9 23.5,.935 24,.92"/></g>
<use href="#af"/>
<g class="tk m"><text x="128" y="473">00</text><text x="198.7" y="473">02</text><text x="269.3" y="473">04</text><text x="340" y="473">06</text><text x="410.7" y="473">08</text><text x="481.3" y="473">10</text><text x="552" y="473">12</text><text x="622.7" y="473">14</text><text x="693.3" y="473">16</text><text x="764" y="473">18</text><text x="834.7" y="473">20</text><text x="905.3" y="473">22</text><text x="976" y="473">24</text></g>
<text class="xl" x="552" y="498">Hours, UTC</text>
<text class="yl" transform="translate(46,376) rotate(-90)" textLength="243">Amplitude, uncalibrated units</text>
</g>

<!-- ============ SECTION 9 ============ -->
<g transform="translate(0,4483.8)">
<text class="t1" x="552" y="26">Grape Narrow Spectrum, Freq. = 25.0 MHz, 2025-11-09T00-00 ,</text>
<text class="t1" x="552" y="42" textLength="534">Lat.  40.67, Long. -105.00 (GridDN70mq) Station: WW0WWV/0 Subchannel 9</text>
<rect x="128" y="49" width="848" height="155" fill="url(#g8)"/>
<rect x="128" y="49" width="848" height="155" fill="url(#str)" opacity=".07"/>
<ellipse cx="150" cy="126" rx="30" ry="40" fill="#a8d000" opacity=".3"/>
<rect x="621" y="49" width="2" height="155" fill="#c8dc00" opacity=".7"/>
<rect x="759" y="60" width="2" height="140" fill="#b0d400" opacity=".5"/>
<rect x="128" y="126" width="848" height="1.5" fill="#f00000"/>
<use href="#sg"/><use href="#sf"/>
<g class="tk r"><text x="122" y="70">4</text><text x="122" y="85.5">3</text><text x="122" y="101">2</text><text x="122" y="116.5">1</text><text x="122" y="132">0</text><text x="122" y="147.5">-1</text><text x="122" y="163">-2</text><text x="122" y="178.5">-3</text><text x="122" y="194">-4</text><text x="122" y="209.5">-5</text></g>
<g class="tk m"><text x="198.7" y="224">02</text><text x="269.3" y="224">04</text><text x="340" y="224">06</text><text x="410.7" y="224">08</text><text x="481.3" y="224">10</text><text x="552" y="224">12</text><text x="622.7" y="224">14</text><text x="693.3" y="224">16</text><text x="764" y="224">18</text><text x="834.7" y="224">20</text><text x="905.3" y="224">22</text></g>
<text class="xl" x="552" y="249">Hours, UTC</text>
<text class="yl" transform="translate(93,127) rotate(-90)" textLength="145">Doppler Shift (Hz)</text>
<text class="at" x="552" y="291">Peak Amplitude by Minute</text>
<use href="#ag"/>
<g class="g"><line x1="128" y1="427.3" x2="976" y2="427.3"/><line x1="128" y1="401.7" x2="976" y2="401.7"/><line x1="128" y1="376" x2="976" y2="376"/><line x1="128" y1="350.3" x2="976" y2="350.3"/><line x1="128" y1="324.7" x2="976" y2="324.7"/></g>
<g class="tk r"><text x="122" y="459">0.0000</text><text x="122" y="433.3">0.0001</text><text x="122" y="407.7">0.0002</text><text x="122" y="382">0.0003</text><text x="122" y="356.3">0.0004</text><text x="122" y="330.7">0.0005</text><text x="122" y="305">0.0006</text></g>
<g transform="translate(128,453) scale(35.3333,-154)"><polyline class="c" vector-effect="non-scaling-stroke" points="0,.85 .3,.875 .6,.88 1,.875 1.1,.89 1.5,.87 2,.875 2.3,.865 2.5,.83 2.8,.84 3,.835 3.3,.845 3.6,.84 3.8,.82 4,.83 4.5,.835 5,.835 5.5,.84 6,.83 6.5,.845 7,.845 7.5,.85 8,.855 8.3,.845 8.7,.855 9,.85 9.5,.848 10,.825 10.5,.83 11,.835 11.5,.83 12,.828 12.5,.82 13,.81 13.5,.815 14,.82 14.5,.822 14.8,.82 15.2,.86 15.5,.85 16,.862 16.5,.865 16.8,.872 17,.85 17.5,.845 17.8,.86 17.9,.95 18,.87 18.3,.86 18.5,.845 18.8,.86 19,.855 19.3,.88 19.6,.87 20,.875 20.5,.885 21,.895 21.5,.89 22,.885 22.3,.895 22.7,.885 23,.88 23.3,.875 23.5,.86 23.7,.88 24,.87"/></g>
<use href="#af"/>
<g class="tk m"><text x="128" y="473">00</text><text x="198.7" y="473">02</text><text x="269.3" y="473">04</text><text x="340" y="473">06</text><text x="410.7" y="473">08</text><text x="481.3" y="473">10</text><text x="552" y="473">12</text><text x="622.7" y="473">14</text><text x="693.3" y="473">16</text><text x="764" y="473">18</text><text x="834.7" y="473">20</text><text x="905.3" y="473">22</text><text x="976" y="473">24</text></g>
<text class="xl" x="552" y="498">Hours, UTC</text>
<text class="yl" transform="translate(46,376) rotate(-90)" textLength="243">Amplitude, uncalibrated units</text>
</g>
</svg>
</body></html>
